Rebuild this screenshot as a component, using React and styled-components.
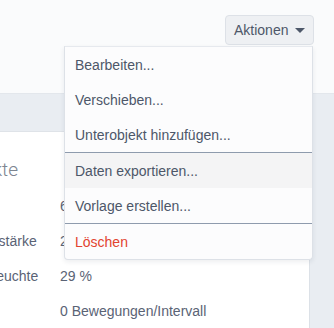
import React from 'react';
import styled, { createGlobalStyle } from 'styled-components';

const GlobalStyle = createGlobalStyle`
  html, body {
    margin: 0;
    padding: 0;
    background: #e9edf2;
    font-family: "Liberation Sans", Arial, sans-serif;
    overflow: hidden;
  }
`;

const StyledPage = styled.div`
  width: 334px;
  height: 328px;
  display: flex;
  flex-direction: column;
  overflow: hidden;
`;

const StyledHeader = styled.div`
  height: 96px;
  box-sizing: border-box;
  background: #fafbfc;
  border-bottom: 1px solid #e3e7ec;
  display: flex;
  justify-content: flex-end;
  align-items: flex-start;
  padding: 15px 20px 0 0;
`;

const StyledActions = styled.div`
  position: relative;
`;

const StyledButton = styled.button`
  height: 30px;
  width: 89px;
  box-sizing: border-box;
  display: flex;
  align-items: center;
  gap: 7px;
  padding: 0 0 0 8px;
  background: #eef0f3;
  border: 1px solid #dde1e7;
  border-radius: 4px;
  font-family: inherit;
  font-size: 14px;
  color: #4d5769;
  cursor: pointer;
`;

const StyledCaret = styled.span`
  width: 0;
  height: 0;
  border-left: 5px solid transparent;
  border-right: 5px solid transparent;
  border-top: 5px solid #4d5769;
  margin-top: 1px;
`;

const StyledMenu = styled.ul`
  position: absolute;
  top: 31px;
  right: 1px;
  width: 249px;
  box-sizing: border-box;
  margin: 0;
  padding: 0;
  list-style: none;
  background: #fcfcfd;
  border: 1px solid #dde1e7;
  border-top-color: #e6e9ee;
  border-radius: 0 0 4px 4px;
  box-shadow: 0 2px 5px rgba(30, 40, 60, 0.08);
  z-index: 10;
`;

const StyledItem = styled.li`
  height: 35px;
  display: flex;
  align-items: center;
  padding-left: 10px;
  font-size: 14px;
  color: ${({ $danger }) => ($danger ? '#e2432f' : '#4d5769')};
  background: ${({ $active }) => ($active ? '#f4f4f5' : 'transparent')};
`;

const StyledDivider = styled.li`
  height: 1px;
  background: #8e9bad;
`;

const StyledBody = styled.div`
  flex: 1;
  display: flex;
  padding: 37px 24px 0 0;
`;

const StyledCard = styled.div`
  flex: 1;
  background: #ffffff;
  border-top: 1px solid #dfe3e8;
  border-right: 1px solid #dce1e7;
  padding-top: 23px;
  overflow: hidden;
`;

/* the card continues to the left of the visible area, so its title is right-aligned and overflows leftward */
const StyledTitle = styled.div`
  width: 18px;
  display: flex;
  justify-content: flex-end;
  margin-bottom: 3px;
  font-family: Roboto, "Liberation Sans", sans-serif;
  font-weight: 300;
  font-size: 19px;
  line-height: 30px;
  color: #7d8591;
  white-space: nowrap;
`;

const StyledTable = styled.div`
  margin-left: -31px;
  display: grid;
  grid-template-columns: 91px 1fr;
  grid-auto-rows: 35px;
  align-items: center;
  font-size: 14px;
  color: #5a6375;
  white-space: nowrap;
`;

const rows = [
  ['', '6,4 °C'],
  ['Lichtstärke', '2 lx'],
  ['Luftfeuchte', '29 %'],
  ['', '0 Bewegungen/Intervall'],
];

const menu = [
  { label: 'Bearbeiten...' },
  { label: 'Verschieben...' },
  { label: 'Unterobjekt hinzufügen...' },
  { divider: true },
  { label: 'Daten exportieren...', active: true },
  { label: 'Vorlage erstellen...' },
  { divider: true },
  { label: 'Löschen', danger: true },
];

export default function App() {
  return (
    <>
      <GlobalStyle />
      <StyledPage>
        <StyledHeader>
          <StyledActions>
            <StyledButton>
              Aktionen
              <StyledCaret />
            </StyledButton>
            <StyledMenu>
              {menu.map((item, i) =>
                item.divider ? (
                  <StyledDivider key={i} />
                ) : (
                  <StyledItem key={i} $active={item.active} $danger={item.danger}>
                    {item.label}
                  </StyledItem>
                )
              )}
            </StyledMenu>
          </StyledActions>
        </StyledHeader>
        <StyledBody>
          <StyledCard>
            <StyledTitle>Datenpunkte</StyledTitle>
            <StyledTable>
              {rows.map(([label, value], i) => (
                <React.Fragment key={i}>
                  <span>{label}</span>
                  <span>{value}</span>
                </React.Fragment>
              ))}
            </StyledTable>
          </StyledCard>
        </StyledBody>
      </StyledPage>
    </>
  );
}
